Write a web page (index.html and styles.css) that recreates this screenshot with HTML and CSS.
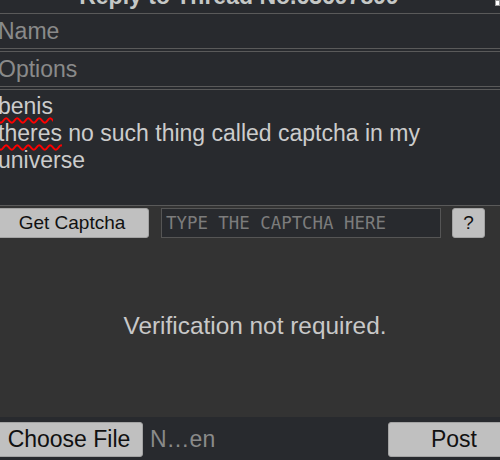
FILE: index.html
```html
<!DOCTYPE html>
<html lang="en">
<head>
  <meta charset="UTF-8">
  <title>Quick Reply</title>
  <link rel="stylesheet" href="styles.css">
</head>
<body>
  <div class="qr">
    <div class="qr-title"><span>Reply to Thread No.63697899</span></div>
    <span class="qr-close"></span>

    <form class="qr-form">
      <input class="field" type="text" placeholder="Name">
      <input class="field" type="text" placeholder="Options">
      <div class="comment">
        <span class="misspelled">benis</span><br>
        <span class="misspelled">theres</span> no such thing called captcha in my<br>
        universe
      </div>

      <!-- captcha -->
      <div class="captcha">
        <div class="captcha-row">
          <button type="button" class="btn btn-captcha">Get Captcha</button>
          <input class="captcha-input" type="text" placeholder="TYPE THE CAPTCHA HERE">
          <button type="button" class="btn btn-help">?</button>
        </div>
        <div class="captcha-status">Verification not required.</div>
      </div>

      <div class="qr-footer">
        <button type="button" class="btn btn-file">Choose File</button>
        <span class="file-name">N…en</span>
        <button type="submit" class="btn btn-post">Post</button>
      </div>
    </form>
  </div>
</body>
</html>
```

FILE: styles.css
```css
/* base */
html, body {
  margin: 0;
  padding: 0;
  height: 460px;
  overflow: hidden;
  background: #282a2e;
}
body {
  font-family: "Liberation Sans", Arial, sans-serif;
  color: #c5c8c6;
}

/* quick reply panel (wider than the window, cut on both sides) */
.qr {
  position: relative;
  width: 520px;
  margin-left: -5px;
}

.qr-title {
  height: 13px;
  overflow: hidden;
  display: flex;
  justify-content: center;
  align-items: flex-end;
  padding-right: 32px;
  font-size: 23px;
  font-weight: bold;
  line-height: 26px;
  white-space: nowrap;
}
.qr-title span {
  margin-bottom: 4px;
}

.qr-close {
  position: absolute;
  left: 500px;
  top: 0;
  width: 5px;
  height: 6px;
  box-sizing: border-box;
  border: 1px solid #999;
  background: #fff;
}

.qr-form {
  display: flex;
  flex-direction: column;
  margin: 0;
}

/* fields */
.field {
  display: block;
  width: 100%;
  height: 36px;
  box-sizing: border-box;
  margin: 0 0 2px;
  padding: 0 2px;
  border: 1px solid #5a5a5a;
  background: #282a2e;
  color: #c5c8c6;
  font-family: "Liberation Sans", Arial, sans-serif;
  font-size: 23px;
  outline: none;
}
.field::placeholder {
  color: #8a8a8a;
}

.comment {
  height: 117px;
  box-sizing: border-box;
  padding: 3px 2px;
  border: 1px solid #5a5a5a;
  font-size: 23px;
  color: #ccc;
  white-space: nowrap;
}
.misspelled {
  text-decoration: underline wavy #f00;
  text-decoration-thickness: 1.5px;
  text-underline-offset: 3px;
}

/* captcha */
.captcha {
  height: 211px;
  display: flex;
  flex-direction: column;
  background: #333;
}
.captcha-row {
  display: flex;
  align-items: center;
  padding-top: 2px;
}
.captcha-input {
  width: 280px;
  height: 30px;
  box-sizing: border-box;
  margin: 0 11px 0 12px;
  padding: 0 4px;
  border: 1px solid #555;
  background: #282a2e;
  color: #c5c8c6;
  font-family: "DejaVu Sans Mono", monospace;
  font-size: 17.4px;
  outline: none;
}
.captcha-input::placeholder {
  color: #7c7c7c;
}
.captcha-status {
  flex: 1;
  display: flex;
  align-items: center;
  justify-content: center;
  padding-bottom: 4px;
  font-size: 24.4px;
  color: #c8c8c8;
}

/* buttons */
.btn {
  box-sizing: border-box;
  padding: 0;
  border: 1px solid #a3a3a3;
  border-radius: 3px;
  background: #c0c0c0;
  color: #111;
  font-family: "Liberation Sans", Arial, sans-serif;
  text-align: center;
  cursor: pointer;
}
.btn-captcha {
  width: 154px;
  height: 30px;
  font-size: 19px;
}
.btn-help {
  width: 33px;
  height: 30px;
  font-size: 19px;
}

/* footer */
.qr-footer {
  display: flex;
  align-items: center;
  padding: 5px 0;
  background: #282a2e;
}
.btn-file {
  width: 148px;
  height: 35px;
  font-size: 23px;
}
.file-name {
  margin-left: 7px;
  font-size: 23px;
  color: #8a8a8a;
}
.btn-post {
  width: 132px;
  height: 35px;
  margin-left: auto;
  margin-right: -5px;
  font-size: 23px;
}
```
